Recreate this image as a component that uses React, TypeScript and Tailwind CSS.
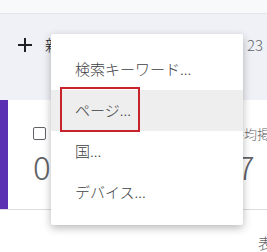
const menuItems = ['検索キーワード...', 'ページ...', '国...', 'デバイス...'];

const App = () => {
    return <div className="relative w-[267px] h-[252px] overflow-hidden bg-white text-[#202124] font-['Noto_Sans_CJK_JP','Noto_Sans',sans-serif]">
        <div className="h-[14px] bg-[#f8f9fb] border-b border-[#e2e5ea]"></div>
        <section className="h-[86px] bg-[#eff1f6] flex items-start justify-between pl-[17px] pr-[4px] pt-[21px]">
            <div className="flex items-center gap-3">
                <svg width="16" height="16" viewBox="0 0 16 16" className="block">
                    <path d="M8 1v14M1 8h14" stroke="#202124" strokeWidth="2" fill="none" />
                </svg>
                <span className="text-[15px] leading-[20px] font-light">新規</span>
            </div>
            <span className="text-[15px] leading-[20px] font-light text-[#5f6368]">最終更新日: 23</span>
        </section>
        <section className="h-[110px] flex border-b border-[#dadce0]">
            <div className="w-[8px] bg-[#5b30b2]"></div>
            <div className="flex-1 flex justify-between pl-[25px] pt-[27px]">
                <div className="flex flex-col">
                    <span className="block w-[13px] h-[13px] border border-[#5f6368] rounded-[2px]"></span>
                    <span className="text-[33px] leading-[32px] font-light text-[#5f6368] mt-[10px]">0</span>
                </div>
                <div className="flex flex-col w-[30px] overflow-hidden">
                    <span className="text-[13px] leading-[14px] font-light text-[#5f6368] whitespace-nowrap -ml-[6px]">平均掲載順位</span>
                    <span className="text-[33px] leading-[32px] font-light text-[#5f6368] mt-[9px]">7</span>
                </div>
            </div>
        </section>
        <div className="flex justify-end pt-[24px]">
            <span className="text-[15px] leading-[18px] font-light text-[#5f6368] w-[9px] overflow-hidden whitespace-nowrap">表示</span>
        </div>
        <div className="absolute left-[51px] top-[34px] w-[192px] bg-white rounded-[2px] shadow-[0_3px_8px_rgba(0,0,0,0.28)] pt-[15px] pb-[12px]">
            {menuItems.map((item, i) => (
                <div key={item} className={`h-[41px] flex items-center pl-[24px] text-[15px] font-light text-[#3c4043] ${i === 1 ? 'bg-[#eeeeee]' : ''}`}>
                    {item}
                </div>
            ))}
            <div className="absolute left-[9px] top-[53px] w-[80px] h-[45px] border-2 border-[#c8232c]"></div>
        </div>
    </div>;
};

export default App;
